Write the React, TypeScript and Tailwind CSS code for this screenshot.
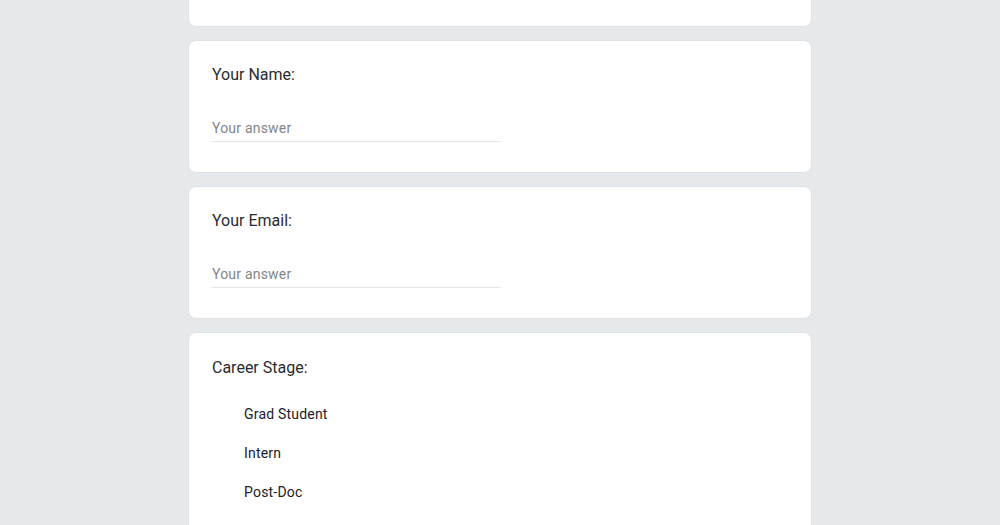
const questions = [
  { label: "Your Name:" },
  { label: "Your Email:" },
];

const stages = ["Grad Student", "Intern", "Post-Doc"];

function Card({ children, className = "" }: { children: React.ReactNode; className?: string }) {
  return (
    <div className={`rounded-lg bg-white border border-[#dfe3e6] px-[23px] ${className}`}>
      {children}
    </div>
  );
}

export default function App() {
  return (
    <div className="min-h-screen h-[525px] overflow-hidden bg-[#e5e9ec] font-['Roboto',sans-serif] text-[#202124]">
      <div className="w-[624px] mx-auto flex flex-col gap-[13px] -mt-[19px]">
        <Card className="h-[46px]">{null}</Card>
        {questions.map((q) => (
          <Card key={q.label} className="h-[133px] pt-[22px]">
            <div className="text-base leading-6 text-[#2a2c30]">{q.label}</div>
            <div className="mt-[29px] w-[288px] border-b border-[#e3e5e8] pb-[1px]">
              <input
                placeholder="Your answer"
                className="w-full text-sm leading-5 tracking-[0.2px] text-[#202124] placeholder:text-[#80868b] outline-none"
              />
            </div>
          </Card>
        ))}
        <Card className="h-[240px] pt-[23px]">
          <div className="text-base leading-6 text-[#2a2c30]">Career Stage:</div>
          <div className="mt-[24px] flex flex-col gap-[19px] pl-[32px]">
            {stages.map((s) => (
              <label key={s} className="text-sm leading-5 text-[#202124] tracking-[0.2px]">
                {s}
              </label>
            ))}
          </div>
        </Card>
      </div>
    </div>
  );
}
